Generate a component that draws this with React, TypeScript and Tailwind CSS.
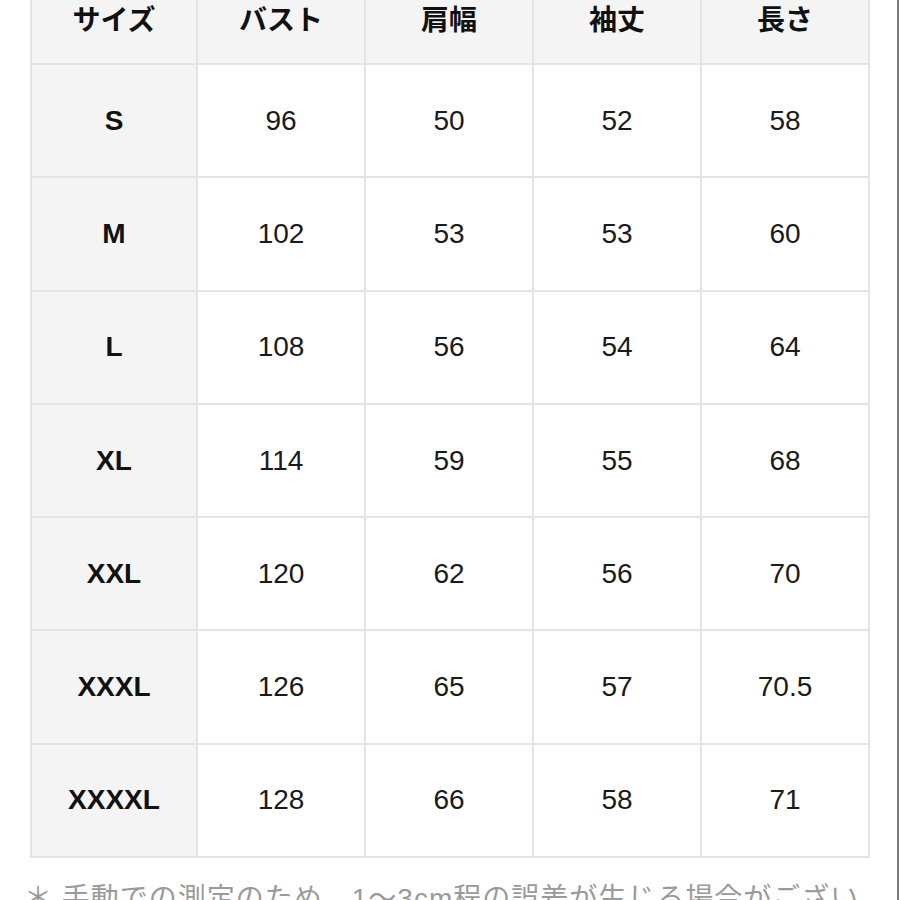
import React from "react";

const headers = ["サイズ", "バスト", "肩幅", "袖丈", "長さ"];

const rows: [string, string, string, string, string][] = [
  ["S", "96", "50", "52", "58"],
  ["M", "102", "53", "53", "60"],
  ["L", "108", "56", "54", "64"],
  ["XL", "114", "59", "55", "68"],
  ["XXL", "120", "62", "56", "70"],
  ["XXXL", "126", "65", "57", "70.5"],
  ["XXXXL", "128", "66", "58", "71"],
];

export default function App() {
  return (
    <div className="w-[900px] h-[900px] overflow-hidden bg-white">
      <div className="w-[899px] h-[900px] border-r-2 border-[#7a7a7a] overflow-hidden">
        <div className="-mt-[29px] ml-[30px] w-[840px]">
          <div className="grid grid-cols-[164px_166px_166px_166px_166px] gap-[2px] p-[2px] bg-[#e4e4e4]">
            {headers.map((h) => (
              <div
                key={h}
                className="h-[90px] bg-[#f4f4f4] flex items-center justify-center text-[28px] font-bold text-[#111] font-['Noto_Sans_CJK_JP',sans-serif]"
              >
                {h}
              </div>
            ))}
            {rows.map((r) =>
              r.map((v, i) => (
                <div
                  key={r[0] + i}
                  className={
                    i === 0
                      ? "h-[111.3px] bg-[#f4f4f4] flex items-center justify-center text-[28px] font-bold text-[#111] font-['Liberation_Sans',sans-serif]"
                      : "h-[111.3px] bg-white flex items-center justify-center text-[28px] text-[#1a1a1a] font-['Liberation_Sans',sans-serif]"
                  }
                >
                  {v}
                </div>
              ))
            )}
          </div>
        </div>
        <p className="mt-[20px] ml-[24px] w-[846px] text-[28px] leading-[42px] tracking-[1px] text-[#9a9a9a] font-['Liberation_Sans','Noto_Sans_CJK_JP',sans-serif]">
          ＊ 手動での測定のため、1〜3cm程の誤差が生じる場合がございます。
        </p>
      </div>
    </div>
  );
}
